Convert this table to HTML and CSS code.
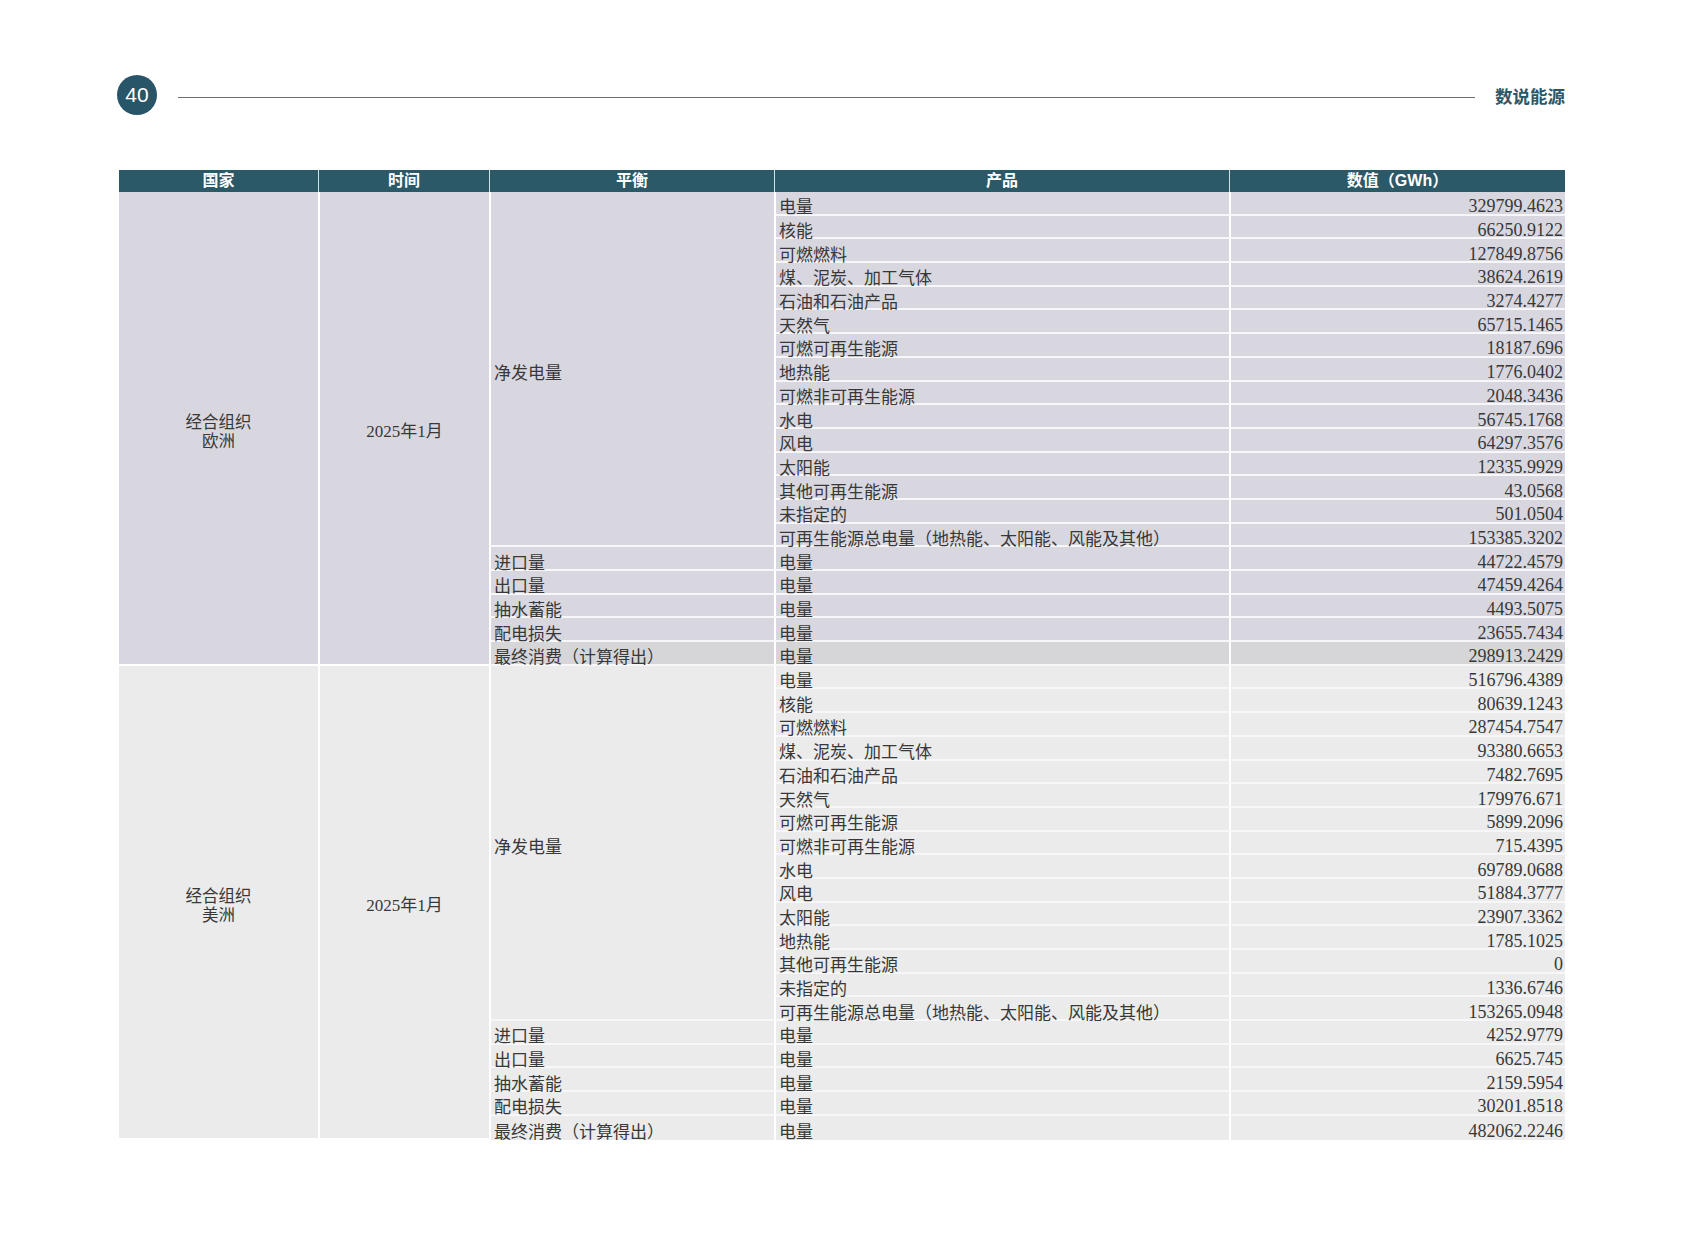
FILE: index.html
```html
<!DOCTYPE html>
<html lang="zh-CN">
<head>
<meta charset="utf-8">
<title>数说能源 40</title>
<link rel="stylesheet" href="styles.css">
</head>
<body>
<div class="page">
  <header class="top">
    <div class="pagenum">40</div>
    <div class="rule"></div>
    <div class="title">数说能源</div>
  </header>
  <table class="data">
    <colgroup>
      <col class="c1"><col class="c2"><col class="c3"><col class="c4"><col class="c5">
    </colgroup>
    <thead>
      <tr><th>国家</th><th>时间</th><th>平衡</th><th>产品</th><th>数值（GWh）</th></tr>
    </thead>
    <tbody class="s1">
      <tr><td class="country" rowspan="20">经合组织<br>欧洲</td><td class="time" rowspan="20">2025年1月</td><td class="bal" rowspan="15">净发电量</td><td class="prod">电量</td><td class="val">329799.4623</td></tr>
      <tr><td class="prod">核能</td><td class="val">66250.9122</td></tr>
      <tr><td class="prod">可燃燃料</td><td class="val">127849.8756</td></tr>
      <tr><td class="prod">煤、泥炭、加工气体</td><td class="val">38624.2619</td></tr>
      <tr><td class="prod">石油和石油产品</td><td class="val">3274.4277</td></tr>
      <tr><td class="prod">天然气</td><td class="val">65715.1465</td></tr>
      <tr><td class="prod">可燃可再生能源</td><td class="val">18187.696</td></tr>
      <tr><td class="prod">地热能</td><td class="val">1776.0402</td></tr>
      <tr><td class="prod">可燃非可再生能源</td><td class="val">2048.3436</td></tr>
      <tr><td class="prod">水电</td><td class="val">56745.1768</td></tr>
      <tr><td class="prod">风电</td><td class="val">64297.3576</td></tr>
      <tr><td class="prod">太阳能</td><td class="val">12335.9929</td></tr>
      <tr><td class="prod">其他可再生能源</td><td class="val">43.0568</td></tr>
      <tr><td class="prod">未指定的</td><td class="val">501.0504</td></tr>
      <tr><td class="prod">可再生能源总电量（地热能、太阳能、风能及其他）</td><td class="val">153385.3202</td></tr>
      <tr><td class="bal">进口量</td><td class="prod">电量</td><td class="val">44722.4579</td></tr>
      <tr><td class="bal">出口量</td><td class="prod">电量</td><td class="val">47459.4264</td></tr>
      <tr><td class="bal">抽水蓄能</td><td class="prod">电量</td><td class="val">4493.5075</td></tr>
      <tr><td class="bal">配电损失</td><td class="prod">电量</td><td class="val">23655.7434</td></tr>
      <tr class="final"><td class="bal">最终消费（计算得出）</td><td class="prod">电量</td><td class="val">298913.2429</td></tr>
    </tbody>
    <tbody class="s2">
      <tr><td class="country" rowspan="20">经合组织<br>美洲</td><td class="time" rowspan="20">2025年1月</td><td class="bal" rowspan="15">净发电量</td><td class="prod">电量</td><td class="val">516796.4389</td></tr>
      <tr><td class="prod">核能</td><td class="val">80639.1243</td></tr>
      <tr><td class="prod">可燃燃料</td><td class="val">287454.7547</td></tr>
      <tr><td class="prod">煤、泥炭、加工气体</td><td class="val">93380.6653</td></tr>
      <tr><td class="prod">石油和石油产品</td><td class="val">7482.7695</td></tr>
      <tr><td class="prod">天然气</td><td class="val">179976.671</td></tr>
      <tr><td class="prod">可燃可再生能源</td><td class="val">5899.2096</td></tr>
      <tr><td class="prod">可燃非可再生能源</td><td class="val">715.4395</td></tr>
      <tr><td class="prod">水电</td><td class="val">69789.0688</td></tr>
      <tr><td class="prod">风电</td><td class="val">51884.3777</td></tr>
      <tr><td class="prod">太阳能</td><td class="val">23907.3362</td></tr>
      <tr><td class="prod">地热能</td><td class="val">1785.1025</td></tr>
      <tr><td class="prod">其他可再生能源</td><td class="val">0</td></tr>
      <tr><td class="prod">未指定的</td><td class="val">1336.6746</td></tr>
      <tr><td class="prod">可再生能源总电量（地热能、太阳能、风能及其他）</td><td class="val">153265.0948</td></tr>
      <tr><td class="bal">进口量</td><td class="prod">电量</td><td class="val">4252.9779</td></tr>
      <tr><td class="bal">出口量</td><td class="prod">电量</td><td class="val">6625.745</td></tr>
      <tr><td class="bal">抽水蓄能</td><td class="prod">电量</td><td class="val">2159.5954</td></tr>
      <tr><td class="bal">配电损失</td><td class="prod">电量</td><td class="val">30201.8518</td></tr>
      <tr><td class="bal">最终消费（计算得出）</td><td class="prod">电量</td><td class="val">482062.2246</td></tr>
    </tbody>
  </table>
</div>
</body>
</html>
```

FILE: styles.css
```css
* { box-sizing: border-box; }
html, body { margin: 0; padding: 0; background: #ffffff; }
body {
  font-family: "Liberation Serif", "Noto Sans CJK SC", serif;
  color: #383838;
}
.page {
  width: 1683px;
  height: 1240px;
  padding: 75px 118px 0 117px;
}
.top {
  display: flex;
  align-items: center;
  height: 40px;
}
.pagenum {
  width: 40px;
  height: 40px;
  border-radius: 50%;
  background: #285568;
  color: #ffffff;
  font-family: "Liberation Sans", Arial, sans-serif;
  font-size: 21px;
  line-height: 40px;
  text-align: center;
  flex: none;
}
.rule {
  flex: 1;
  height: 1px;
  background: #6f6f6f;
  margin: 5px 20px 0 21px;
}
.title {
  font-family: "Noto Sans CJK SC", sans-serif;
  font-weight: 700;
  font-size: 17.5px;
  line-height: 20px;
  color: #2b5869;
  margin-top: 2px;
}
.data {
  margin-top: 55px;
  margin-left: 2px;
  width: 1446px;
  border-collapse: separate;
  border-spacing: 0;
  table-layout: fixed;
}
.c1 { width: 199px; }
.c2 { width: 171px; }
.c3 { width: 285px; }
.c4 { width: 455px; }
.c5 { width: 336px; }
.data th {
  height: 22px;
  padding: 0;
  background: #2b5968;
  color: #ffffff;
  font-family: "Liberation Sans", "Noto Sans CJK SC", sans-serif;
  font-weight: 700;
  font-size: 16px;
  line-height: 22px;
  text-align: center;
  border-left: 1px solid #cfe3ea;
}
.data th:first-child { border-left: none; }
.data tbody tr { height: 23.7px; }
.data td {
  padding: 7px 3px 0 3px;
  font-family: "Noto Sans CJK SC", sans-serif;
  font-size: 17px;
  line-height: 14px;
  white-space: nowrap;
  border-left: 2px solid #ffffff;
  border-bottom: 2px solid #f7f7f9;
  vertical-align: middle;
}
.data td.country {
  border-left: none;
  text-align: center;
  line-height: 19px;
  font-size: 16.5px;
}
.data td.time {
  text-align: center;
  font-family: "Liberation Serif", "Noto Sans CJK SC", serif;
  font-size: 17px;
  line-height: 19px;
}
.data td.country, .data td.time { border-bottom: 2px solid #ffffff; }
.data td.val {
  text-align: right;
  padding-right: 2px;
  font-family: "Liberation Serif", serif;
  font-size: 18px;
}
.data td.prod { padding-left: 3px; }
.s1 td { background: #d8d7df; }
.s1 tr.final td.prod, .s1 tr.final td.val, .s1 tr.final td.bal { background: #d6d6d8; }
.s2 td { background: #ebebeb; }
.s2 tr:last-child td { border-bottom: none; }
```
